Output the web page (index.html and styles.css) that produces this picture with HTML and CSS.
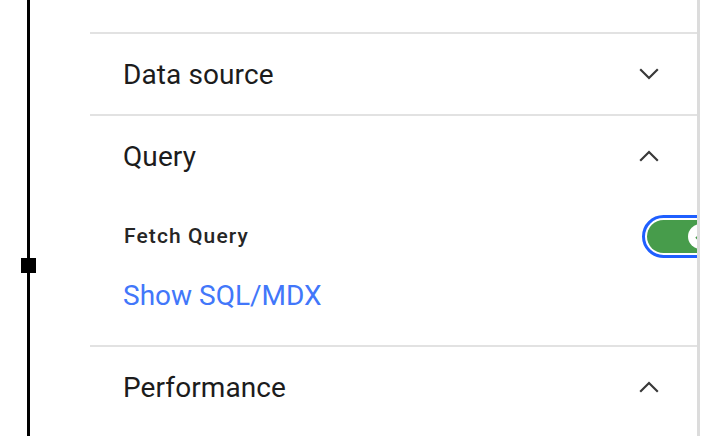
FILE: index.html
```html
<!DOCTYPE html>
<html lang="en">
<head>
<meta charset="utf-8">
<title>Properties</title>
<link rel="stylesheet" href="styles.css">
</head>
<body>
<div class="page">
  <div class="rail">
    <div class="track"><span class="handle"></span></div>
  </div>
  <div class="panel">
    <div class="top-space"></div>
    <section class="section">
      <div class="header">
        <span class="title">Data source</span>
        <svg class="chev" viewBox="0 0 20 12" width="20" height="12"><polyline points="1.2,1.2 10,10 18.8,1.2" fill="none" stroke="#393939" stroke-width="2.2"/></svg>
      </div>
    </section>
    <section class="section">
      <div class="header">
        <span class="title">Query</span>
        <svg class="chev" viewBox="0 0 20 12" width="20" height="12"><polyline points="1.2,10.8 10,2 18.8,10.8" fill="none" stroke="#393939" stroke-width="2.2"/></svg>
      </div>
      <div class="content">
        <div class="toggle-row">
          <span class="label">Fetch Query</span>
          <span class="toggle">
            <span class="toggle-track">
              <span class="knob">
                <svg viewBox="0 0 12 10" width="12" height="10"><polyline points="1,5 4.5,8.5 11,1.5" fill="none" stroke="#479c4b" stroke-width="2"/></svg>
              </span>
            </span>
          </span>
        </div>
        <a class="link" href="#">Show SQL/MDX</a>
      </div>
    </section>
    <section class="section">
      <div class="header">
        <span class="title">Performance</span>
        <svg class="chev" viewBox="0 0 20 12" width="20" height="12"><polyline points="1.2,10.8 10,2 18.8,10.8" fill="none" stroke="#393939" stroke-width="2.2"/></svg>
      </div>
    </section>
  </div>
</div>
</body>
</html>
```

FILE: styles.css
```css
html, body {
  margin: 0;
  padding: 0;
  background: #ffffff;
}

body {
  font-family: Roboto, "Liberation Sans", sans-serif;
  color: #161616;
}

.page {
  display: flex;
  width: 704px;
  height: 436px;
  overflow: hidden;
  background: #ffffff;
}

.rail {
  width: 90px;
  flex: none;
  display: flex;
}

.track {
  margin-left: 27px;
  width: 3px;
  height: 100%;
  background: #000000;
  position: relative;
}

.handle {
  position: absolute;
  left: -6px;
  top: 258px;
  width: 15px;
  height: 15px;
  background: #000000;
}

.panel {
  width: 607px;
  flex: none;
  overflow: hidden;
  border-right: 3px solid #dcdcdc;
}

.top-space {
  height: 32px;
}

.section {
  border-top: 2px solid #e2e2e2;
}

.header {
  height: 80px;
  display: flex;
  align-items: center;
  justify-content: space-between;
  padding: 0 38px 0 33px;
}

.title {
  font-size: 28px;
  line-height: 28px;
  font-weight: 400;
  color: #1c1c1c;
  letter-spacing: 0.1px;
  padding-top: 2px;
}

.chev {
  display: block;
}

.content {
  padding: 19px 0 35px 0;
}

.toggle-row {
  display: flex;
  align-items: center;
  padding-left: 34px;
  margin-right: -25px;
}

.label {
  flex: 1;
  font-size: 21px;
  line-height: 21px;
  font-weight: 500;
  letter-spacing: 1.1px;
  color: #262626;
}

.toggle {
  display: flex;
  border: 3px solid #1f5fff;
  border-radius: 30px;
  padding: 2px;
  background: #ffffff;
}

.toggle-track {
  width: 70px;
  height: 33px;
  border-radius: 17px;
  background: #479c4b;
  display: flex;
  align-items: center;
  justify-content: flex-end;
  padding-right: 4px;
  box-sizing: border-box;
}

.knob {
  width: 25px;
  height: 25px;
  border-radius: 50%;
  background: #ffffff;
  display: flex;
  align-items: center;
  justify-content: center;
}

.knob svg {
  display: block;
}

.link {
  display: block;
  margin: 24px 0 0 33px;
  font-size: 28px;
  line-height: 28px;
  color: #4277fa;
  text-decoration: none;
  width: max-content;
}
```
